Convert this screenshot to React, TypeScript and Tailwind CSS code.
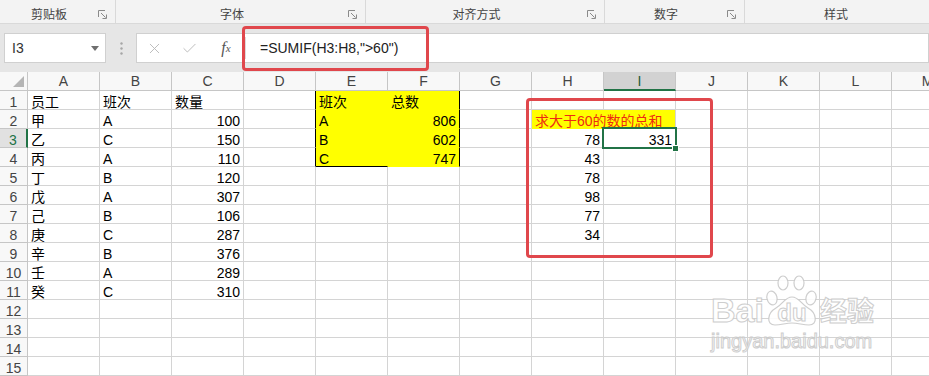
import { X, Check } from 'lucide-react';

const COLS = ['A', 'B', 'C', 'D', 'E', 'F', 'G', 'H', 'I', 'J', 'K', 'L', 'M'];

type Cell = { t: string; right?: boolean; red?: boolean };

const staff = [
  ['员工', '班次', '数量'],
  ['甲', 'A', '100'],
  ['乙', 'C', '150'],
  ['丙', 'A', '110'],
  ['丁', 'B', '120'],
  ['戊', 'A', '307'],
  ['己', 'B', '106'],
  ['庚', 'C', '287'],
  ['辛', 'B', '376'],
  ['壬', 'A', '289'],
  ['癸', 'C', '310'],
];

const cells: Record<string, Cell> = {};
staff.forEach((r, i) => {
  cells[`A${i + 1}`] = { t: r[0] };
  cells[`B${i + 1}`] = { t: r[1] };
  cells[`C${i + 1}`] = { t: r[2], right: i > 0 };
});
[
  ['班次', '总数'],
  ['A', '806'],
  ['B', '602'],
  ['C', '747'],
].forEach((r, i) => {
  cells[`E${i + 1}`] = { t: r[0] };
  cells[`F${i + 1}`] = { t: r[1], right: i > 0 };
});
cells.H2 = { t: '求大于60的数的总和', red: true };
['78', '43', '78', '98', '77', '34'].forEach((v, i) => {
  cells[`H${i + 3}`] = { t: v, right: true };
});
cells.I3 = { t: '331', right: true };

const yellow = new Set(['E1', 'E2', 'E3', 'E4', 'F1', 'F2', 'F3', 'F4', 'H2', 'I2']);
const blackRight = new Set(['D1', 'D2', 'D3', 'D4', 'F1', 'F2', 'F3', 'F4']);

function rightBorder(key: string) {
  if (blackRight.has(key)) return 'border-r-black';
  if (key === 'H2' || (yellow.has(key) && key.startsWith('E'))) return 'border-r-[#ffff00]';
  return 'border-r-[#d4d4d4]';
}

function bottomBorder(key: string) {
  if (key === 'E4') return 'border-b-black';
  if (yellow.has(key)) return 'border-b-[#ffff00]';
  return 'border-b-[#d4d4d4]';
}

function Launcher() {
  return (
    <svg width="9" height="9" viewBox="0 0 9 9" className="mt-[5px]">
      <path d="M0.5 7V0.5H7" stroke="#8a8a8a" fill="none" />
      <path d="M3 3L7.5 7.5M8.5 4.5V8.5H4.5" stroke="#8a8a8a" fill="none" />
    </svg>
  );
}

function RibbonGroup({ label, width, launcher = true }: { label: string; width: string; launcher?: boolean }) {
  return (
    <div className={`${width} h-full flex items-center border-r border-[#d9d9d9] shrink-0`}>
      <div className="flex-1 text-center pt-[5px]">{label}</div>
      <div className="w-[17px] flex justify-start">{launcher && <Launcher />}</div>
    </div>
  );
}

function Paw() {
  return (
    <svg width="56" height="54" viewBox="0 0 56 54">
      <g fill="#ffffff" stroke="#c9c9c9" strokeWidth="1.2">
        <ellipse cx="8" cy="24" rx="5" ry="7" transform="rotate(-15 8 24)" />
        <ellipse cx="19" cy="9" rx="5" ry="7" />
        <ellipse cx="35" cy="9" rx="5" ry="7" />
        <ellipse cx="47" cy="24" rx="5" ry="7" transform="rotate(15 47 24)" />
        <path d="M11 51C2 51 3 39 12 34C19 30 21 23 28 23C35 23 37 30 44 34C53 39 54 51 45 51C39 51 34 49 28 49C22 49 17 51 11 51Z" />
      </g>
      <text
        x="28"
        y="47"
        textAnchor="middle"
        fontFamily="Liberation Sans, sans-serif"
        fontWeight="bold"
        fontSize="24"
        fill="#ffffff"
        stroke="#c9c9c9"
        strokeWidth="1"
      >
        du
      </text>
    </svg>
  );
}

export default function App() {
  return (
    <div className="w-[929px] h-[376px] overflow-hidden relative bg-[#e6e6e6] font-['Liberation_Sans','Noto_Sans_CJK_SC',sans-serif]">
      <div className="h-[24px] bg-[#f3f3f3] border-b border-[#d9d9d9] flex text-[12px] text-[#444] font-['Noto_Sans_CJK_SC',sans-serif]">
        <RibbonGroup label="剪贴板" width="w-[116px]" />
        <RibbonGroup label="字体" width="w-[250px]" />
        <RibbonGroup label="对齐方式" width="w-[239px]" />
        <RibbonGroup label="数字" width="w-[140px]" />
        <RibbonGroup label="样式" width="w-[200px]" launcher={false} />
      </div>

      <div className="h-[9px]" />

      <div className="h-[30px] flex">
        <div className="ml-[4px] w-[102px] h-full bg-white border border-[#d0d0d0] flex items-center pl-[7px] pr-[6px] text-[14px] text-[#333]">
          <span className="flex-1">I3</span>
          <svg width="8" height="5" viewBox="0 0 8 5">
            <path d="M0 0H8L4 5Z" fill="#6f6f6f" />
          </svg>
        </div>
        <div className="w-[30px] flex items-center justify-center">
          <svg width="3" height="13" viewBox="0 0 3 13">
            <circle cx="1.5" cy="1.5" r="1.2" fill="#a6a6a6" />
            <circle cx="1.5" cy="6.5" r="1.2" fill="#a6a6a6" />
            <circle cx="1.5" cy="11.5" r="1.2" fill="#a6a6a6" />
          </svg>
        </div>
        <div className="flex-1 h-full bg-white border border-[#d0d0d0] flex items-center">
          <div className="w-[35px] flex justify-center">
            <X size={17} strokeWidth={1.3} className="text-[#b8b8b8]" />
          </div>
          <div className="w-[35px] flex justify-center">
            <Check size={17} strokeWidth={1.3} className="text-[#b8b8b8]" />
          </div>
          <div className="w-[38px] flex justify-center text-[#555] italic font-['Liberation_Serif',serif] text-[16px]">
            f<span className="text-[11px] mt-[4px]">x</span>
          </div>
          <div className="w-px h-[22px] bg-[#dcdcdc]" />
          <div className="pl-[14px] text-[14px] text-[#222]">=SUMIF(H3:H8,"&gt;60")</div>
        </div>
      </div>

      <div className="h-[9px]" />

      <div className="grid grid-cols-[28px_repeat(13,72px)] auto-rows-[19px] w-[964px] text-[14px] text-black">
        <div className="bg-[#f8f8f8] border-r border-b border-[#c6c6c6] flex items-end justify-end pr-[3px] pb-[3px]">
          <svg width="11" height="11" viewBox="0 0 11 11">
            <path d="M11 0V11H0Z" fill="#b5b5b5" />
          </svg>
        </div>
        {COLS.map((c) =>
          c === 'I' ? (
            <div
              key={c}
              className="bg-[#d2d2d2] border-r border-[#c6c6c6] border-b-2 border-b-[#217346] flex items-center justify-center pt-[1px] text-[#1e5c3a]"
            >
              {c}
            </div>
          ) : (
            <div
              key={c}
              className="bg-[#f8f8f8] border-r border-b border-[#c6c6c6] flex items-center justify-center pt-[1px] text-[#444]"
            >
              {c}
            </div>
          ),
        )}
        {Array.from({ length: 15 }, (_, i) => i + 1).map((r) => [
          r === 3 ? (
            <div
              key={`h${r}`}
              className="bg-[#e1e1e1] border-b border-[#c6c6c6] border-r-2 border-r-[#217346] flex items-end justify-center leading-[14px] text-[#217346]"
            >
              {r}
            </div>
          ) : (
            <div
              key={`h${r}`}
              className="bg-[#f8f8f8] border-r border-b border-[#c6c6c6] flex items-end justify-center leading-[14px] text-[#444]"
            >
              {r}
            </div>
          ),
          ...COLS.map((c) => {
            const key = `${c}${r}`;
            const cell = cells[key];
            return (
              <div
                key={key}
                className={`border-r border-b ${rightBorder(key)} ${bottomBorder(key)} ${
                  yellow.has(key) ? 'bg-[#ffff00]' : 'bg-white'
                } flex items-end leading-[14px] px-[3px] ${cell?.right ? 'justify-end' : 'justify-start'}`}
              >
                {cell && (
                  <span
                    className={`relative z-10 whitespace-nowrap ${cell.red ? 'text-[#ee2a12]' : 'text-black'}`}
                  >
                    {cell.t}
                  </span>
                )}
              </div>
            );
          }),
        ])}
      </div>

      {/* selection on I3 */}
      <div className="absolute left-[602px] top-[127px] w-[75px] h-[22px] border-2 border-[#217346] z-20" />
      <div className="absolute left-[672px] top-[145px] w-[7px] h-[7px] bg-[#217346] border border-white z-20" />

      {/* red highlight boxes */}
      <div className="absolute left-[242px] top-[26px] w-[187px] h-[45px] border-[3px] border-[#e0474c] rounded-[4px] z-30" />
      <div className="absolute left-[526px] top-[98px] w-[187px] h-[160px] border-[3px] border-[#e0474c] rounded-[4px] z-30" />

      {/* watermark */}
      <div className="absolute left-[711px] top-[274px] z-30 opacity-90 pointer-events-none">
        <div className="flex items-start">
          <span className="mt-[19px] text-[34px] leading-[34px] font-bold text-white [-webkit-text-stroke:1px_#c9c9c9]">
            Bai
          </span>
          <Paw />
          <span className="mt-[21px] text-[27px] leading-[30px] font-bold text-white [-webkit-text-stroke:1px_#c9c9c9] font-['Noto_Sans_CJK_SC',sans-serif]">
            经验
          </span>
        </div>
        <div className="mt-[2px] text-[20px] leading-[22px] text-white [-webkit-text-stroke:1px_#c9c9c9]">
          jingyan.baidu.com
        </div>
      </div>
    </div>
  );
}
